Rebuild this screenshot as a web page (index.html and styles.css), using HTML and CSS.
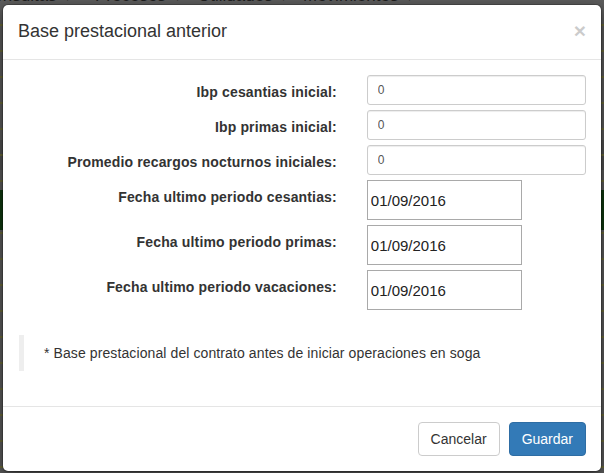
FILE: index.html
```html
<!DOCTYPE html>
<html lang="es">
<head>
<meta charset="utf-8">
<title>Base prestacional anterior</title>
<link rel="stylesheet" href="styles.css">
</head>
<body>
<div class="page">
  <nav class="topnav">
    <span class="nav-item first">Consultas <span class="caret">▾</span></span>
    <span class="nav-item">Procesos <span class="caret">▾</span></span>
    <span class="nav-item">Utilidades <span class="caret">▾</span></span>
    <span class="nav-item">Movimientos <span class="caret">▾</span></span>
  </nav>
</div>

<div class="modal">
  <div class="modal-header">
    <button class="close" type="button">×</button>
    <h4 class="modal-title">Base prestacional anterior</h4>
  </div>
  <div class="modal-body">
    <form class="form">
      <div class="form-group">
        <label class="control-label">Ibp cesantias inicial:</label>
        <div class="field"><input class="form-control" type="text" value="0"></div>
      </div>
      <div class="form-group">
        <label class="control-label">Ibp primas inicial:</label>
        <div class="field"><input class="form-control" type="text" value="0"></div>
      </div>
      <div class="form-group">
        <label class="control-label">Promedio recargos nocturnos iniciales:</label>
        <div class="field"><input class="form-control" type="text" value="0"></div>
      </div>
      <div class="form-group">
        <label class="control-label">Fecha ultimo periodo cesantias:</label>
        <div class="field"><input class="date-input" type="text" value="01/09/2016"></div>
      </div>
      <div class="form-group">
        <label class="control-label">Fecha ultimo periodo primas:</label>
        <div class="field"><input class="date-input" type="text" value="01/09/2016"></div>
      </div>
      <div class="form-group">
        <label class="control-label">Fecha ultimo periodo vacaciones:</label>
        <div class="field"><input class="date-input" type="text" value="01/09/2016"></div>
      </div>
    </form>
    <blockquote class="note">* Base prestacional del contrato antes de iniciar operaciones en soga</blockquote>
  </div>
  <div class="modal-footer">
    <button class="btn btn-default" type="button">Cancelar</button>
    <button class="btn btn-primary" type="button">Guardar</button>
  </div>
</div>
</body>
</html>
```

FILE: styles.css
```css
* { box-sizing: border-box; }

html, body {
  margin: 0;
  height: 100%;
}

body {
  font-family: "Liberation Sans", Arial, Helvetica, sans-serif;
  font-size: 14px;
  line-height: 1.42857;
  color: #333;
  overflow: hidden;
  background:
    linear-gradient(to bottom,
      transparent 0, transparent 190px,
      #0f3a0f 190px, #0f3a0f 230px,
      transparent 230px),
    repeating-linear-gradient(to bottom,
      transparent 0, transparent 24px,
      #6b6a3a 24px, #6b6a3a 26px),
    linear-gradient(to bottom,
      #5d5d5d 0, #5d5d5d 140px,
      #525252 140px, #525252 170px,
      #5d5d5d 170px);
}

.page {
  height: 100%;
}

.topnav {
  display: flex;
  margin-top: -13px;
  font-size: 17px;
  color: #1e1e1e;
  background: #5d5d5d;
  height: 17px;
  line-height: 17px;
}

.nav-item {
  white-space: nowrap;
}

.nav-item.first {
  margin-left: -19px;
  width: 114px;
}

.nav-item:nth-child(2) { width: 103px; }
.nav-item:nth-child(3) { width: 105px; }

.caret {
  font-size: 10px;
  margin-left: 4px;
}

/* modal */
.modal {
  position: absolute;
  left: 2px;
  top: 4px;
  width: 600px;
  background: #fff;
  border: 1px solid rgba(0, 0, 0, 0.2);
  border-radius: 6px;
  box-shadow: 0 5px 15px rgba(0, 0, 0, 0.5);
  background-clip: padding-box;
}

.modal-header {
  padding: 14px 15px 15px;
  border-bottom: 1px solid #e5e5e5;
}

.modal-title {
  margin: 0;
  font-size: 18px;
  font-weight: normal;
  line-height: 25px;
  color: #333;
}

.close {
  float: right;
  margin-top: 1px;
  padding: 0;
  border: 0;
  background: transparent;
  font-family: "Liberation Sans", Arial, sans-serif;
  font-size: 21px;
  font-weight: bold;
  line-height: 1;
  color: #000;
  opacity: 0.2;
}

.modal-body {
  padding: 15px;
}

.form {
  margin: 0 -15px;
}

.form-group {
  display: flex;
  margin-bottom: 5px;
}

.control-label {
  flex: 0 0 58.3333%;
  padding: 7px 15px 0;
  text-align: right;
  font-weight: bold;
  line-height: 20px;
  letter-spacing: 0.15px;
}

.field {
  flex: 0 0 41.6667%;
  padding: 0 15px;
}

.form-control {
  display: block;
  width: 100%;
  height: 30px;
  padding: 5px 10px;
  font-family: "Liberation Sans", Arial, sans-serif;
  font-size: 12px;
  line-height: 1.5;
  color: #555;
  background: #fff;
  border: 1px solid #ccc;
  border-radius: 3px;
  box-shadow: inset 0 1px 1px rgba(0, 0, 0, 0.075);
}

.date-input {
  display: block;
  width: 155px;
  height: 40px;
  padding: 0 3px;
  font-family: "Liberation Sans", Arial, sans-serif;
  font-size: 15px;
  color: #222;
  background: #fff;
  border: 1px solid #a9a9a9;
  border-radius: 0;
}

.note {
  margin: 25px 0 20px 1px;
  padding: 8px 20px;
  border-left: 5px solid #eee;
  font-size: 14px;
  line-height: 20px;
  letter-spacing: 0.1px;
}

.modal-footer {
  display: flex;
  justify-content: flex-end;
  gap: 9px;
  padding: 15px;
  border-top: 1px solid #e5e5e5;
}

.btn {
  display: inline-block;
  padding: 6px 12px;
  font-family: "Liberation Sans", Arial, sans-serif;
  font-size: 14px;
  line-height: 20px;
  border: 1px solid transparent;
  border-radius: 4px;
}

.btn-default {
  color: #333;
  background: #fff;
  border-color: #ccc;
}

.btn-primary {
  color: #fff;
  background: #337ab7;
  border-color: #2e6da4;
}
```
